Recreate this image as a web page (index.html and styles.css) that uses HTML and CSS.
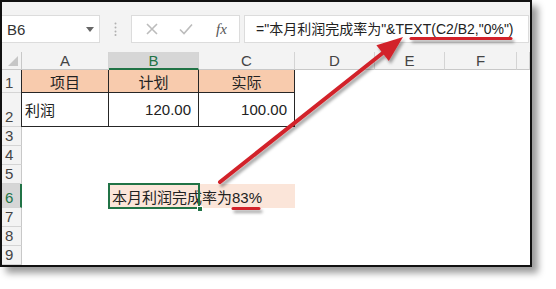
FILE: index.html
```html
<!DOCTYPE html>
<html lang="zh-CN">

<head>
    <meta charset="UTF-8">
    <meta name="viewport" content="width=device-width, initial-scale=1.0">
    <title>TEXT 函数</title>
    <link rel="stylesheet" href="styles.css">
</head>

<body>
    <div class="stage">
        <div class="window">
            <div class="toolbar">
                <div class="nameBox">
                    <span>B6</span>
                    <svg class="drop" width="8" height="5" viewBox="0 0 8 5"><polygon points="0,0 8,0 4,5" /></svg>
                </div>
                <div class="grip">
                    <svg width="3" height="14" viewBox="0 0 3 14">
                        <circle cx="1.5" cy="1.5" r="1" />
                        <circle cx="1.5" cy="5.5" r="1" />
                        <circle cx="1.5" cy="9.5" r="1" />
                        <circle cx="1.5" cy="13" r="1" />
                    </svg>
                </div>
                <div class="fxButtons">
                    <svg class="btnIcon" width="12" height="12" viewBox="0 0 12 12">
                        <path d="M1 1 L11 11 M11 1 L1 11" />
                    </svg>
                    <svg class="btnIcon ok" width="14" height="12" viewBox="0 0 14 12">
                        <path d="M1 6.5 L5 10.5 L13 1.5" />
                    </svg>
                    <span class="fx">fx</span>
                </div>
                <div class="formula">="本月利润完成率为"&amp;TEXT(C2/B2,"0%")</div>
            </div>

            <div class="sheet">
                <!-- header row -->
                <div class="corner"><svg width="10" height="10" viewBox="0 0 10 10"><polygon points="10,0 10,10 0,10" /></svg></div>
                <div class="colHead">A</div>
                <div class="colHead picked">B</div>
                <div class="colHead">C</div>
                <div class="colHead">D</div>
                <div class="colHead">E</div>
                <div class="colHead">F</div>
                <div class="colHead"></div>

                <!-- row 1 -->
                <div class="rowHead">1</div>
                <div class="cell t first title mid">项目</div>
                <div class="cell t title mid">计划</div>
                <div class="cell t title mid">实际</div>
                <div class="cell"></div>
                <div class="cell"></div>
                <div class="cell"></div>
                <div class="cell"></div>

                <!-- row 2 -->
                <div class="rowHead">2</div>
                <div class="cell t first">利润</div>
                <div class="cell t num">120.00</div>
                <div class="cell t num">100.00</div>
                <div class="cell"></div>
                <div class="cell"></div>
                <div class="cell"></div>
                <div class="cell"></div>

                <div class="rowHead">3</div>
                <div class="cell"></div><div class="cell"></div><div class="cell"></div>
                <div class="cell"></div><div class="cell"></div><div class="cell"></div><div class="cell"></div>

                <div class="rowHead">4</div>
                <div class="cell"></div><div class="cell"></div><div class="cell"></div>
                <div class="cell"></div><div class="cell"></div><div class="cell"></div><div class="cell"></div>

                <div class="rowHead">5</div>
                <div class="cell"></div><div class="cell"></div><div class="cell"></div>
                <div class="cell"></div><div class="cell"></div><div class="cell"></div><div class="cell"></div>

                <!-- row 6 : result -->
                <div class="rowHead picked">6</div>
                <div class="cell"></div>
                <div class="cell tint active">本月利润完成率为83%<span class="handle"></span></div>
                <div class="cell tint"></div>
                <div class="cell"></div>
                <div class="cell"></div>
                <div class="cell"></div>
                <div class="cell"></div>

                <div class="rowHead">7</div>
                <div class="cell"></div><div class="cell"></div><div class="cell"></div>
                <div class="cell"></div><div class="cell"></div><div class="cell"></div><div class="cell"></div>

                <div class="rowHead">8</div>
                <div class="cell"></div><div class="cell"></div><div class="cell"></div>
                <div class="cell"></div><div class="cell"></div><div class="cell"></div><div class="cell"></div>

                <div class="rowHead">9</div>
                <div class="cell"></div><div class="cell"></div><div class="cell"></div>
                <div class="cell"></div><div class="cell"></div><div class="cell"></div><div class="cell"></div>
            </div>
        </div>

        <!-- red marks drawn over the screenshot -->
        <svg class="marks" width="556" height="289" viewBox="0 0 556 289">
            <defs>
                <filter id="shade" x="-10%" y="-10%" width="130%" height="130%">
                    <feDropShadow dx="2" dy="3" stdDeviation="1.5" flood-color="#000" flood-opacity="0.35" />
                </filter>
            </defs>
            <g filter="url(#shade)">
                <line class="redLine" x1="220" y1="182" x2="384" y2="52" stroke-width="4" />
                <polygon class="redHead" points="403,37 376.4,45.3 388.8,60.9" />
                <line class="redLine" x1="411" y1="38.5" x2="511" y2="38.5" stroke-width="3" />
                <line class="redLine" x1="233" y1="208.5" x2="259" y2="208.5" stroke-width="3" />
            </g>
        </svg>
    </div>
</body>

</html>
```

FILE: styles.css
```css
* {
    box-sizing: border-box;
}

body {
    margin: 0;
    background: #fff;
    font-family: "Liberation Sans", "Noto Sans CJK SC", sans-serif;
    color: #222;
}

.stage {
    position: relative;
    width: 556px;
    height: 289px;
}

.window {
    width: 532px;
    height: 267px;
    border: 2px solid #111;
    background: #fff;
    box-shadow: 6px 6px 7px rgba(0, 0, 0, 0.4);
    overflow: hidden;
}

/* formula bar */
.toolbar {
    height: 50px;
    display: flex;
    align-items: flex-start;
    padding-top: 13px;
    background: #f3f3f3;
}

.nameBox {
    width: 98px;
    height: 28px;
    background: #fff;
    border: 1px solid #dcdcdc;
    border-left: none;
    display: flex;
    align-items: center;
    justify-content: space-between;
    padding: 0 5px 0 5px;
    font-size: 15px;
    color: #333;
}

.drop {
    fill: #666;
}

.grip {
    width: 31px;
    height: 28px;
    display: flex;
    align-items: center;
    justify-content: center;
}

.grip svg {
    fill: #b0b0b0;
}

.fxButtons {
    width: 109px;
    height: 28px;
    background: #fff;
    border: 1px solid #dcdcdc;
    display: flex;
    align-items: center;
    padding-left: 14px;
}

.btnIcon {
    fill: none;
    stroke: #bcbcbc;
    stroke-width: 1.6;
}

.btnIcon.ok {
    margin-left: 21px;
}

.fx {
    margin-left: 23px;
    font-family: "Liberation Serif", serif;
    font-style: italic;
    font-size: 15px;
    color: #555;
}

.formula {
    flex: 1;
    height: 28px;
    margin: 0 1px 0 4px;
    background: #fff;
    border: 1px solid #dcdcdc;
    padding-left: 11px;
    font-size: 14px;
    line-height: 26px;
    white-space: nowrap;
    color: #222;
}

/* worksheet */
.sheet {
    display: grid;
    grid-template-columns: 20px 87px 90px 96px 80px 70px 72px 1fr;
    grid-template-rows: 18px 23px 34px 19px 19px 19px 24px 19px 19px 19px;
    font-size: 15px;
}

.corner {
    background: #f3f3f3;
    border-right: 1px solid #c8c8c8;
    border-bottom: 1px solid #c8c8c8;
    display: flex;
    align-items: flex-end;
    justify-content: flex-end;
    padding: 0 3px 3px 0;
}

.corner svg {
    fill: #c6c6c6;
}

.colHead {
    background: #f3f3f3;
    border-right: 1px solid #d4d4d4;
    border-bottom: 1px solid #c8c8c8;
    display: flex;
    align-items: center;
    justify-content: center;
    color: #444;
    font-size: 15px;
}

.colHead.picked {
    background: #d6d6d6;
    border-bottom: 2px solid #217346;
    color: #217346;
}

.rowHead {
    background: #f3f3f3;
    border-right: 1px solid #c8c8c8;
    border-bottom: 1px solid #d4d4d4;
    display: flex;
    align-items: flex-end;
    padding: 0 0 0 3px;
    color: #444;
    font-size: 15px;
    line-height: 18px;
}

.rowHead.picked {
    background: #d6d6d6;
    border-right: 2px solid #217346;
    color: #217346;
}

.cell {
    display: flex;
    align-items: center;
    padding: 0 3px;
    white-space: nowrap;
}

.cell.t {
    border-right: 1px solid #262626;
    border-bottom: 1px solid #262626;
}

.cell.first {
    border-left: 1px solid #262626;
    margin-left: -1px;
}

.cell.title {
    background: #f8cbad;
}

.cell.mid {
    justify-content: center;
}

.cell.num {
    justify-content: flex-end;
    padding-right: 7px;
}

.cell.tint {
    background: #fbe5d9;
}

.cell.active {
    position: relative;
    z-index: 1;
    outline: 2px solid #217346;
    outline-offset: -1px;
    overflow: visible;
}

.handle {
    position: absolute;
    right: -4px;
    bottom: -4px;
    width: 6px;
    height: 6px;
    background: #217346;
    border: 1px solid #fff;
}

/* annotation layer */
.marks {
    position: absolute;
    top: 0;
    left: 0;
    pointer-events: none;
}

.redLine {
    stroke: #d2232a;
    stroke-linecap: round;
}

.redHead {
    fill: #d2232a;
}
```
